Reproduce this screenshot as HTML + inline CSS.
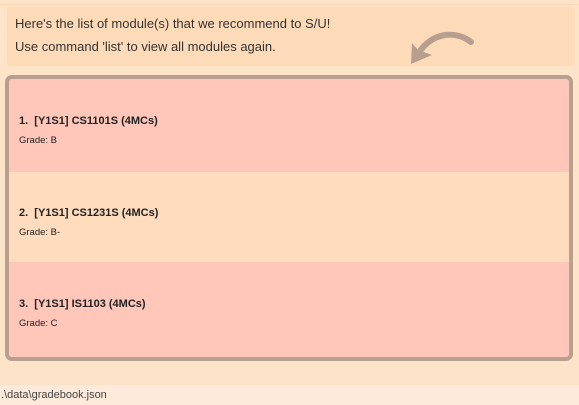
<!DOCTYPE html><html><head><style>
body{margin:0;width:579px;height:404px;background:#fde3c8;font-family:"Liberation Sans",sans-serif;position:relative;overflow:hidden}
.top{position:absolute;left:0;top:0;width:579px;height:4px;background:#fde3c8;border-bottom:1px solid #fcd7b5}
.msg{position:absolute;left:7px;top:7px;width:568px;height:59px;background:#fedbb8;border-radius:3px}
.msg div{position:absolute;left:8px;font-size:13px;color:#333}
.list{position:absolute;left:5px;top:75px;width:560px;height:278px;border:4px solid #b89f8f;border-radius:7px;overflow:hidden;background:#ffd0c0}
.c{position:absolute;left:0;width:560px}
.c b{position:absolute;left:10px;font-size:11px;color:#222}
.c span{position:absolute;left:10px;font-size:9.5px;color:#222}
.st{position:absolute;left:0;top:384px;width:579px;height:20px;background:#fdeadb;border-top:1px solid #fbe0c8;font-size:11px;color:#444}
</style></head><body>
<div class="top"></div>
<div class="msg"><div style="top:9px">Here's the list of module(s) that we recommend to S/U!</div><div style="top:32px">Use command 'list' to view all modules again.</div></div>
<svg style="position:absolute;left:0;top:0" width="579" height="404"><path d="M471 42 C455 30 432 32 418 54" stroke="#b89e8e" stroke-width="6" fill="none" stroke-linecap="round"/><path d="M411 64 L412 43 L418 50 L432 55 Z" fill="#b89e8e"/></svg>
<div class="list">
<div class="c" style="top:0;height:93px;background:#ffc7b9"><b style="top:36px">1.&nbsp; [Y1S1] CS1101S (4MCs)</b><span style="top:56px">Grade: B</span></div>
<div class="c" style="top:93px;height:90px;background:#ffdcbe"><b style="top:35px">2.&nbsp; [Y1S1] CS1231S (4MCs)</b><span style="top:55px">Grade: B-</span></div>
<div class="c" style="top:183px;height:95px;background:#ffc7b9"><b style="top:36px">3.&nbsp; [Y1S1] IS1103 (4MCs)</b><span style="top:56px">Grade: C</span></div>
</div>
<div class="st"><span style="position:absolute;left:1px;top:4px">.\data\gradebook.json</span></div>
</body></html>
